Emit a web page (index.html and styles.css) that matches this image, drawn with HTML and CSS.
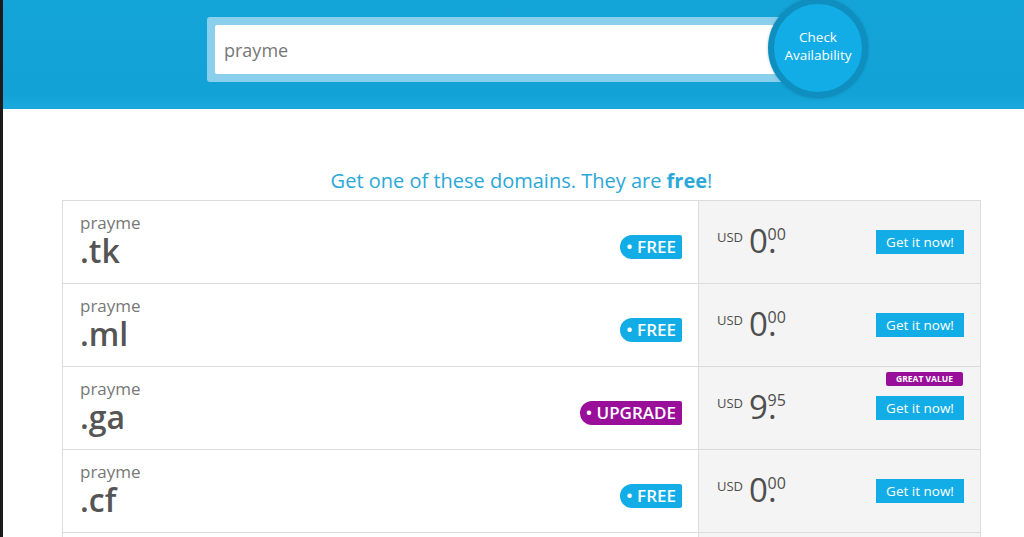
FILE: index.html
```html
<!DOCTYPE html>
<html>
<head>
<meta charset="utf-8">
<link rel="stylesheet" href="styles.css">
</head>
<body>
<header class="hero">
  <div class="search">
    <div class="search-field">prayme</div>
  </div>
  <div class="check">Check<br>Availability</div>
</header>
<main class="main">
  <h2 class="title">Get one of these domains. They are <b>free</b>!</h2>
  <div class="table">
    <div class="row">
      <div class="domain">
        <div class="name"><div class="sld">prayme</div><div class="tld">.tk</div></div>
        <span class="badge free">&#8226; FREE</span>
      </div>
      <div class="offer">
        <div class="price"><span class="cur">USD</span><span class="int">0</span><span class="dot">.</span><span class="dec">00</span></div>
        <span class="buy">Get it now!</span>
      </div>
    </div>
    <div class="row">
      <div class="domain">
        <div class="name"><div class="sld">prayme</div><div class="tld">.ml</div></div>
        <span class="badge free">&#8226; FREE</span>
      </div>
      <div class="offer">
        <div class="price"><span class="cur">USD</span><span class="int">0</span><span class="dot">.</span><span class="dec">00</span></div>
        <span class="buy">Get it now!</span>
      </div>
    </div>
    <div class="row">
      <div class="domain">
        <div class="name"><div class="sld">prayme</div><div class="tld">.ga</div></div>
        <span class="badge upgrade">&#8226; UPGRADE</span>
      </div>
      <div class="offer">
        <span class="great">GREAT VALUE</span>
        <div class="price"><span class="cur">USD</span><span class="int">9</span><span class="dot">.</span><span class="dec">95</span></div>
        <span class="buy">Get it now!</span>
      </div>
    </div>
    <div class="row">
      <div class="domain">
        <div class="name"><div class="sld">prayme</div><div class="tld">.cf</div></div>
        <span class="badge free">&#8226; FREE</span>
      </div>
      <div class="offer">
        <div class="price"><span class="cur">USD</span><span class="int">0</span><span class="dot">.</span><span class="dec">00</span></div>
        <span class="buy">Get it now!</span>
      </div>
    </div>
    <div class="row">
      <div class="domain">
        <div class="name"><div class="sld">prayme</div><div class="tld">.gq</div></div>
        <span class="badge free">&#8226; FREE</span>
      </div>
      <div class="offer">
        <div class="price"><span class="cur">USD</span><span class="int">0</span><span class="dot">.</span><span class="dec">00</span></div>
        <span class="buy">Get it now!</span>
      </div>
    </div>
  </div>
</main>
</body>
</html>
```
FILE: styles.css
```css
* { box-sizing: border-box; }
html, body { margin: 0; padding: 0; }
body {
  font-family: "Open Sans", "Liberation Sans", sans-serif;
  background: #fff;
  border-left: 3px solid #1b1b1b;
  min-height: 537px;
}
.hero {
  height: 109px;
  background: linear-gradient(180deg, #14a5d8 0%, #12a2d6 85%, #1aa9dc 100%);
  display: flex;
  align-items: flex-start;
  padding-left: 204px;
  overflow: hidden;
}
.search {
  margin-top: 17px;
  width: 590px;
  height: 65px;
  padding: 8px 0 8px 8px;
  background: #8ad0ec;
  border-radius: 3px;
}
.search-field {
  height: 49px;
  background: #fff;
  border-radius: 2px;
  padding: 2px 0 0 9px;
  font-size: 18px;
  line-height: 47px;
  color: #777;
}
.check {
  position: relative;
  z-index: 1;
  margin-left: -29px;
  margin-top: -2px;
  width: 100px;
  height: 100px;
  border-radius: 50%;
  border: 6px solid #0f8fbf;
  background: #12ade6;
  color: #fff;
  font-size: 13.5px;
  line-height: 18px;
  display: flex;
  align-items: center;
  justify-content: center;
  text-align: center;
  padding-bottom: 4px;
  box-shadow: 0 0 3px rgba(0,60,100,0.3);
}
.main {
  padding: 59px 43px 0 59px;
}
.title {
  margin: 0 0 7px;
  text-align: center;
  font-weight: 400;
  font-size: 20px;
  line-height: 25px;
  color: #2aa8d8;
}
.title b { font-weight: 700; }
.table {
  border-top: 1px solid #dcdcdc;
  border-left: 1px solid #dcdcdc;
  border-right: 1px solid #dcdcdc;
}
.row {
  display: grid;
  grid-template-columns: 636px 1fr;
  height: 83px;
  border-bottom: 1px solid #dcdcdc;
}
.domain {
  display: flex;
  align-items: center;
  justify-content: space-between;
  padding: 0 16px 0 17px;
  border-right: 1px solid #dcdcdc;
}
.name { margin-top: -3px; }
.sld {
  font-size: 17px;
  line-height: 20px;
  color: #777;
}
.tld {
  font-size: 32px;
  line-height: 36px;
  font-weight: 600;
  color: #555;
}
.badge {
  margin-top: 9px;
  height: 24px;
  padding: 0 6px 0 6px;
  border-radius: 12px 2px 2px 12px;
  color: #fff;
  font-size: 17px;
  font-weight: 600;
  line-height: 24px;
}
.badge.free { background: #12ade6; }
.badge.upgrade { background: #9a0f9a; }
.offer {
  position: relative;
  background: #f4f4f4;
  display: flex;
  align-items: center;
  justify-content: space-between;
  padding: 0 16px 0 18px;
}
.price {
  display: flex;
  align-items: flex-start;
  color: #4e4e4e;
  margin-top: -4px;
}
.cur {
  font-size: 13px;
  line-height: 13px;
  margin-top: 7px;
  margin-right: 6px;
}
.int {
  font-size: 33px;
  line-height: 33px;
}
.dot {
  font-size: 33px;
  line-height: 33px;
}
.dec {
  font-size: 16px;
  line-height: 16px;
  margin-left: -9px;
  margin-top: 2px;
}
.buy {
  width: 88px;
  height: 24px;
  background: #12ade6;
  color: #fff;
  font-size: 13.5px;
  line-height: 24px;
  text-align: center;
}
.great {
  position: absolute;
  top: 5px;
  right: 17px;
  width: 77px;
  height: 14px;
  border-radius: 2px;
  background: #9a0f9a;
  color: #fff;
  font-size: 8.5px;
  font-weight: 700;
  line-height: 14px;
  text-align: center;
}
```
